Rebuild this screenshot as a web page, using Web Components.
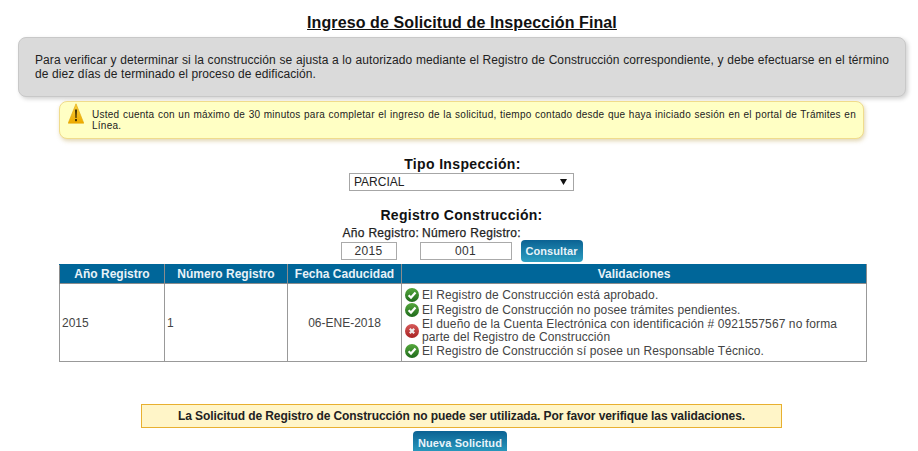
<!DOCTYPE html>
<html lang="es"><head><meta charset="utf-8"><title>Ingreso de Solicitud</title>
<style>
html,body{margin:0;padding:0;background:#fff;overflow:hidden;height:451px}
body{font-family:"Liberation Sans",Arial,sans-serif;color:#222}
</style></head><body>
<inspection-page></inspection-page>
<template id="t-page"><style>
:host{display:flex;flex-direction:column;align-items:center;box-sizing:border-box;width:918px;height:451px;padding-left:6px;overflow:hidden}
*{flex-shrink:0}
h1{margin:14px 0 0 0;font-size:16px;line-height:18px;font-weight:bold;text-decoration:underline;color:#111;letter-spacing:.1px}
.sec{text-align:center}
.lab{font-size:14px;line-height:16px;font-weight:bold;color:#111;letter-spacing:.3px}
.row-labs{display:flex;justify-content:flex-start;gap:3px;font-size:12px;line-height:14px;font-weight:normal;-webkit-text-stroke:.25px #222;letter-spacing:.3px;color:#222;margin:3px 0 0 2px}
.row-ins{display:flex;justify-content:center;align-items:flex-start}
.inp{box-sizing:border-box;border:1px solid #aaa;height:18px;font-size:12px;line-height:16px;text-align:center;color:#333;letter-spacing:.3px}
.sel{box-sizing:border-box;width:225px;height:18px;border:1px solid #a6a6a6;display:flex;justify-content:space-between;align-items:center;padding:0 6px 0 4px;font-size:12px;color:#222;margin:1px auto 0}
.sel svg{display:block}
</style>
<h1>Ingreso de Solicitud de Inspección Final</h1>
<gray-note>Para verificar y determinar si la construcción se ajusta a lo autorizado mediante el Registro de Construcción correspondiente, y debe efectuarse en el término de diez días de terminado el proceso de edificación.</gray-note>
<warn-note>Usted cuenta con un máximo de 30 minutos para completar el ingreso de la solicitud, tiempo contado desde que haya iniciado sesión en el portal de Trámites en Línea.</warn-note>
<div class="sec" style="margin:17px 0 0 -1px;width:225px">
  <div class="lab" style="padding-left:2px;letter-spacing:.35px">Tipo Inspección:</div>
  <div class="sel"><span>PARCIAL</span><svg width="7" height="6" viewBox="0 0 7 6"><path d="M0 0h7L3.5 6z" fill="#111"/></svg></div>
</div>
<div class="sec" style="margin:16px 0 0 -1px">
  <div class="lab">Registro Construcción:</div>
  <div class="row-labs"><span>Año Registro:</span><span>Número Registro:</span></div>
  <div class="row-ins">
    <div class="inp" style="width:56px;margin-top:2px">2015</div>
    <div class="inp" style="width:92px;margin:2px 9px 0 23px">001</div>
    <blue-btn style="height:22px;width:62px">Consultar</blue-btn>
  </div>
</div>
<reg-table></reg-table>
<div style="box-sizing:border-box;width:641px;height:24px;margin:42px 0 0 -1px;background:#fff5c8;border:1px solid #e8b030;font-size:12px;font-weight:bold;line-height:22px;text-align:center;color:#222;letter-spacing:-.09px">La Solicitud de Registro de Construcción no puede ser utilizada. Por favor verifique las validaciones.</div>
<blue-btn style="margin:3px 0 0 -4px;width:94px">Nueva Solicitud</blue-btn>
</template>
<template id="t-gray"><style>
:host{display:block;box-sizing:border-box;width:888px;height:60px;margin-top:5px;background:#dadada;border:1px solid #c8c8c8;border-radius:8px;box-shadow:2px 2px 4px rgba(0,0,0,.18);padding:15px 16px 0 16px;font-size:12px;line-height:14px;letter-spacing:.08px;color:#222;text-align:justify}
</style><slot></slot></template>
<template id="t-warn"><style>
:host{display:flex;box-sizing:border-box;width:805px;height:38px;margin:4px 0 0 -1px;background:#ffffc4;border:1px solid #f0dc8c;border-radius:8px;box-shadow:1px 2px 4px rgba(180,150,60,.4);padding:1px 7px 0 8px;gap:8px;font-size:10px;line-height:11px;color:#222;letter-spacing:.25px;text-align:justify}
svg{flex:none;display:block}div{flex:1;padding-top:6px}
</style><svg width="16" height="21" viewBox="0 0 16 21"><defs><linearGradient id="w" x1="0" y1="0" x2="0" y2="1"><stop offset="0" stop-color="#f8d040"/><stop offset="1" stop-color="#eeaa00"/></linearGradient></defs><path d="M8 .8 15.8 20.2H.2z" fill="url(#w)" stroke="#e3a400" stroke-width=".6" stroke-linejoin="round"/><path d="M6.9 6.5h2.2L8.6 15H7.4z" fill="#4a3500"/><rect x="7" y="16" width="2" height="2.2" fill="#4a3500"/></svg><div><slot></slot></div></template>
<template id="t-btn"><style>
:host{display:flex;box-sizing:border-box;height:23px;align-items:center;justify-content:center;background:linear-gradient(#0b6293,#2c9fc2);border-radius:4px;font-size:11px;font-weight:bold;letter-spacing:.1px;color:#e8f4fa;white-space:nowrap}
</style><slot></slot></template>
<template id="t-table"><style>
:host{display:block;width:808px;margin:2px 0 0 2px}
table{border-collapse:collapse;width:808px;table-layout:fixed;font-size:12px;color:#444}
th{background:#006699;color:#e8f2f8;font-weight:bold;height:18px;padding:0;border:1px solid #8c8c8c;border-top-color:#006699;border-bottom-color:#8c8c8c;line-height:17px}
th+th{border-left-color:#a8c4d4}
td{border:1px solid #999;padding:0 2px;height:76px}
.c{text-align:center}
.v{padding:1px 2px 0 3px;line-height:13px;letter-spacing:.1px}
.i{display:flex;align-items:center;gap:3px;min-height:15px;padding-right:20px}
svg{flex:none;display:block}
</style>
<table><colgroup><col style="width:105px"><col style="width:123px"><col style="width:114px"><col></colgroup>
<tr><th>Año Registro</th><th>Número Registro</th><th>Fecha Caducidad</th><th>Validaciones</th></tr>
<tr><td>2015</td><td>1</td><td class="c">06-ENE-2018</td><td class="v">
<div class="i"><ok-i></ok-i><span>El Registro de Construcción está aprobado.</span></div>
<div class="i"><ok-i></ok-i><span>El Registro de Construcción no posee trámites pendientes.</span></div>
<div class="i"><no-i></no-i><span>El dueño de la Cuenta Electrónica con identificación # 0921557567 no forma parte del Registro de Construcción</span></div>
<div class="i"><ok-i></ok-i><span>El Registro de Construcción sí posee un Responsable Técnico.</span></div>
</td></tr></table></template>
<script>
const def=(n,id)=>customElements.define(n,class extends HTMLElement{constructor(){super();this.attachShadow({mode:"open"}).append(document.getElementById(id).content.cloneNode(true))}});
const ic=(n,html)=>customElements.define(n,class extends HTMLElement{constructor(){super();this.attachShadow({mode:"open"}).innerHTML='<style>:host{display:block;width:14px;height:14px;flex:none}svg{display:block}</style>'+html}});
ic("ok-i",'<svg width="14" height="14" viewBox="0 0 14 14"><defs><linearGradient id="g" x1="0" y1="0" x2="0" y2="1"><stop offset="0" stop-color="#55a83c"/><stop offset="1" stop-color="#1f6a1c"/></linearGradient></defs><circle cx="7" cy="7" r="7" fill="url(#g)"/><path d="M3.6 7.2 6 9.6 10.5 4.6" fill="none" stroke="#fff" stroke-width="2.2"/></svg>');
ic("no-i",'<svg width="14" height="14" viewBox="0 0 14 14"><defs><linearGradient id="r" x1="0" y1="0" x2="0" y2="1"><stop offset="0" stop-color="#d65a5a"/><stop offset="1" stop-color="#a82222"/></linearGradient></defs><circle cx="7" cy="7" r="7" fill="url(#r)"/><path d="M4.8 4.8 9.2 9.2M9.2 4.8 4.8 9.2" stroke="#eee" stroke-width="2.2"/></svg>');
def("blue-btn","t-btn");def("gray-note","t-gray");def("warn-note","t-warn");def("reg-table","t-table");def("inspection-page","t-page");
</script>
</body></html>
